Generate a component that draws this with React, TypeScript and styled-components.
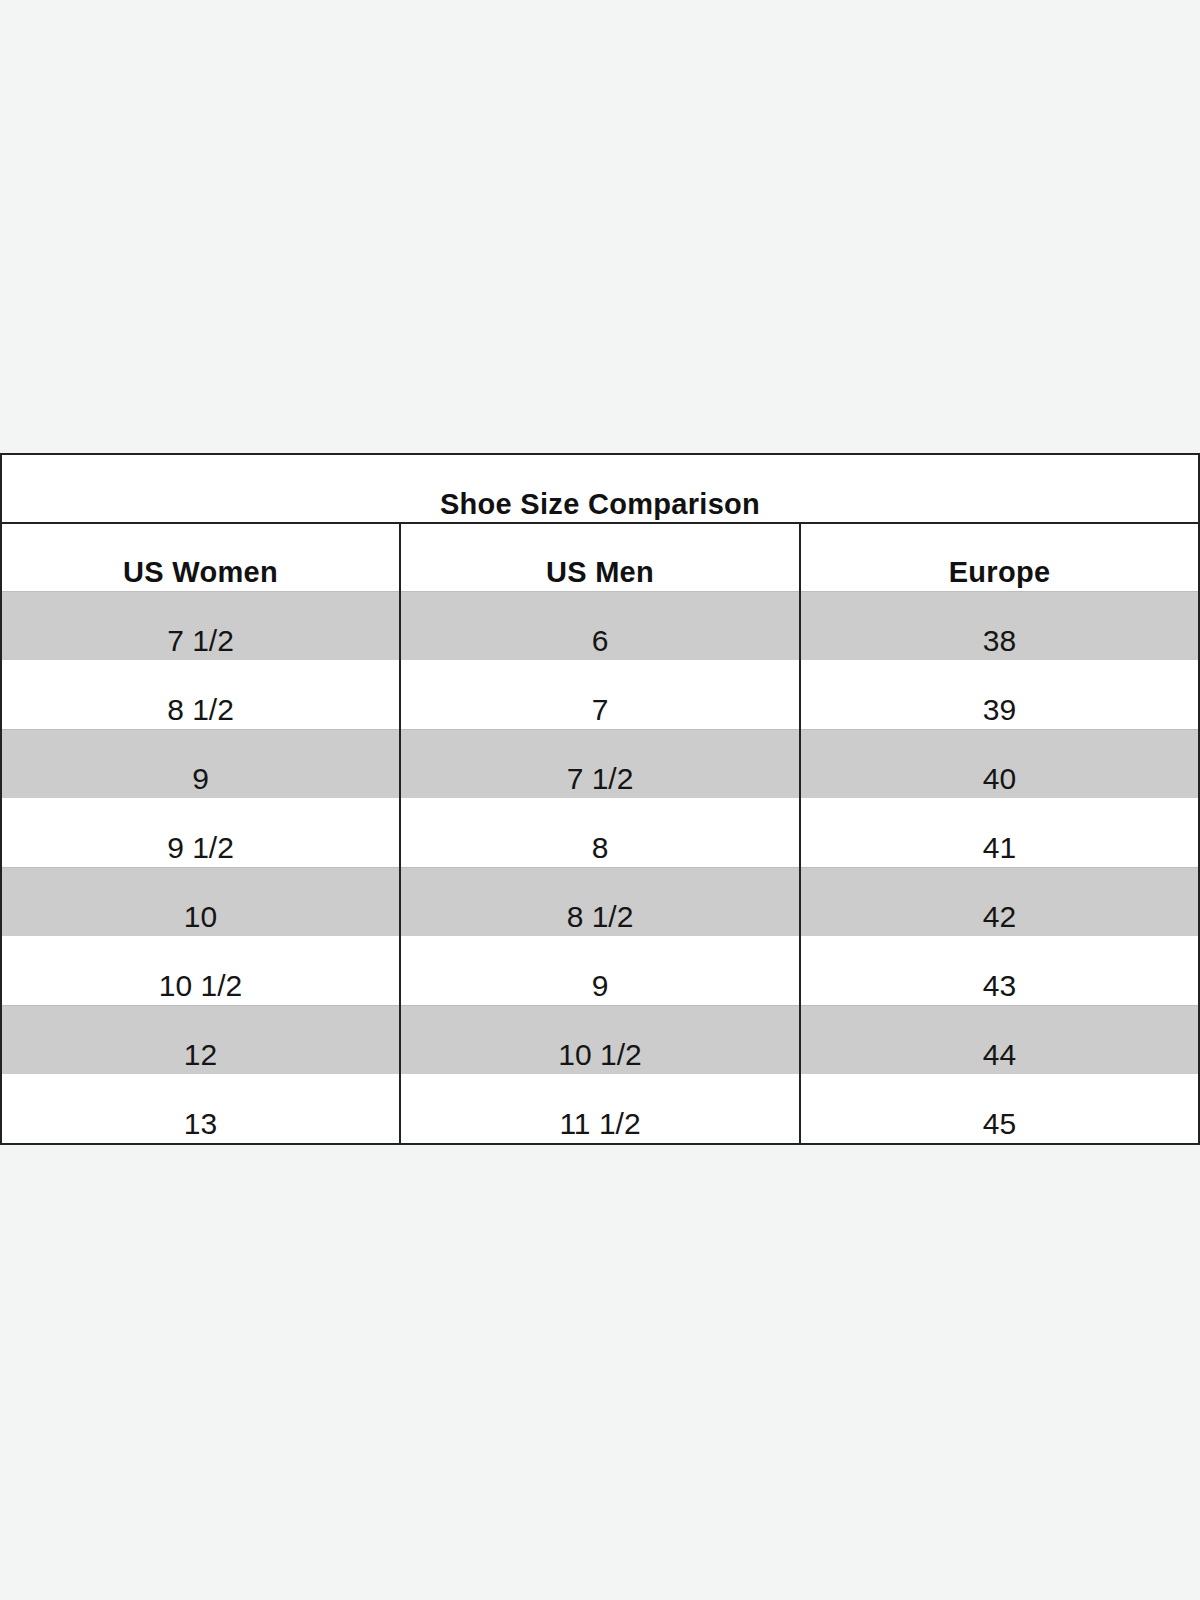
import React from "react";
import styled, { createGlobalStyle } from "styled-components";

const GlobalStyle = createGlobalStyle`
  html, body {
    margin: 0;
    padding: 0;
    background: #f3f5f4;
  }
  body {
    font-family: "Liberation Sans", Arial, Helvetica, sans-serif;
  }
`;

const Page = styled.div`
  width: 1200px;
  height: 1600px;
  box-sizing: border-box;
  padding-top: 453px;
  background: #f3f5f4;
`;

const Table = styled.div`
  width: 1200px;
  box-sizing: border-box;
  display: grid;
  grid-template-columns: 397px 400px 399px;
  border: 2px solid #222;
  background: #ffffff;
`;

const TitleCell = styled.div`
  grid-column: 1 / -1;
  height: 69px;
  box-sizing: border-box;
  border-bottom: 2px solid #222;
  display: flex;
  align-items: flex-end;
  justify-content: center;
  padding-bottom: 1px;
  font-size: 29px;
  font-weight: 700;
  letter-spacing: 0.3px;
  color: #111;
`;

const HeaderCell = styled.div<{ $first?: boolean }>`
  height: 67px;
  box-sizing: border-box;
  border-left: ${(p) => (p.$first ? "none" : "2px solid #222")};
  display: flex;
  align-items: flex-end;
  justify-content: center;
  padding-bottom: 2px;
  font-size: 29px;
  font-weight: 700;
  letter-spacing: 0.3px;
  color: #111;
`;

const DataCell = styled.div<{ $first?: boolean; $shaded?: boolean }>`
  height: 69px;
  box-sizing: border-box;
  border-left: ${(p) => (p.$first ? "none" : "2px solid #222")};
  background: ${(p) => (p.$shaded ? "#cccccc" : "#ffffff")};
  box-shadow: ${(p) => (p.$shaded ? "inset 0 1px 0 #bdbdbd" : "none")};
  display: flex;
  align-items: flex-end;
  justify-content: center;
  padding-bottom: 2px;
  font-size: 30px;
  font-weight: 400;
  color: #151515;
`;

const headers = ["US Women", "US Men", "Europe"];

const rows: string[][] = [
  ["7 1/2", "6", "38"],
  ["8 1/2", "7", "39"],
  ["9", "7 1/2", "40"],
  ["9 1/2", "8", "41"],
  ["10", "8 1/2", "42"],
  ["10 1/2", "9", "43"],
  ["12", "10 1/2", "44"],
  ["13", "11 1/2", "45"],
];

export default function App() {
  return (
    <>
      <GlobalStyle />
      <Page>
        <Table>
          <TitleCell>Shoe Size Comparison</TitleCell>
          {headers.map((h, i) => (
            <HeaderCell key={h} $first={i === 0}>
              {h}
            </HeaderCell>
          ))}
          {rows.map((row, r) =>
            row.map((v, c) => (
              <DataCell key={`${r}-${c}`} $first={c === 0} $shaded={r % 2 === 0}>
                {v}
              </DataCell>
            ))
          )}
        </Table>
      </Page>
    </>
  );
}
